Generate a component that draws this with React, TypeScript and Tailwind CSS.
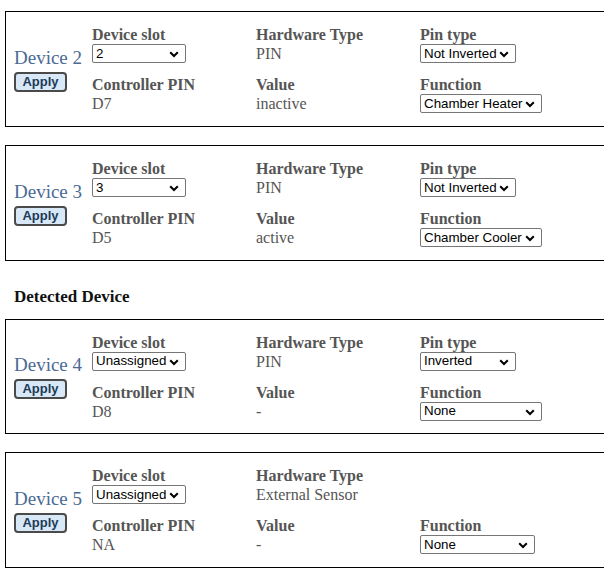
import React from "react";

const serif = { fontFamily: '"Liberation Serif", "Times New Roman", serif' };
const sans = { fontFamily: '"Liberation Sans", Arial, sans-serif' };

function Select({ value, width }: { value: string; width: number }) {
  return (
    <div
      className="relative flex h-[19px] items-center rounded-[2px] border border-[#767676] bg-white pl-[3px] text-[13.33px] leading-none text-black"
      style={{ ...sans, width }}
    >
      <span>{value}</span>
      <svg
        className="absolute right-[6px] top-[6px]"
        width="10"
        height="7"
        viewBox="0 0 10 7"
      >
        <path d="M1.2 1.2 L5 5 L8.8 1.2" fill="none" stroke="#000" strokeWidth="2" />
      </svg>
    </div>
  );
}

function Label({ children }: { children: React.ReactNode }) {
  return (
    <div className="text-[16px] font-bold leading-[18px] text-[#555]" style={serif}>
      {children}
    </div>
  );
}

function Val({ children }: { children: React.ReactNode }) {
  return (
    <div className="pt-[1px] text-[16px] leading-[18px] text-[#555]" style={serif}>
      {children}
    </div>
  );
}

type Dev = {
  n: number;
  slot: string;
  hw: string;
  pinType?: string;
  pinW?: number;
  pin: string;
  value: string;
  func: string;
  funcW: number;
  short?: boolean;
};

function DeviceBox({ d }: { d: Dev }) {
  return (
    <div
      className={
        d.short
          ? "ml-[5px] flex h-[115px] w-[640px] items-center border border-black"
          : "ml-[5px] flex h-[116px] w-[640px] items-center border border-black"
      }
    >
      <div className="flex w-[78px] flex-col items-start pl-[8px]">
        <div className="text-[19px] leading-[22px] text-[#4a6a94]" style={serif}>
          Device {d.n}
        </div>
        <button
          className="mt-[3px] flex h-[20px] w-[53px] items-center justify-center rounded-[4px] border-2 border-[#4a4a4a] bg-[#d9e8f6] text-[13px] font-bold text-[#1d3a58]"
          style={sans}
        >
          Apply
        </button>
      </div>
      <div className="ml-[8px] grid grid-cols-[164px_164px_164px] gap-y-[13px] pt-[1px]">
        <div>
          <Label>Device slot</Label>
          <Select value={d.slot} width={94} />
        </div>
        <div>
          <Label>Hardware Type</Label>
          <Val>{d.hw}</Val>
        </div>
        <div>
          {d.pinType ? (
            <>
              <Label>Pin type</Label>
              <Select value={d.pinType} width={d.pinW ?? 96} />
            </>
          ) : null}
        </div>
        <div>
          <Label>Controller PIN</Label>
          <Val>{d.pin}</Val>
        </div>
        <div>
          <Label>Value</Label>
          <Val>{d.value}</Val>
        </div>
        <div>
          <Label>Function</Label>
          <Select value={d.func} width={d.funcW} />
        </div>
      </div>
    </div>
  );
}

export default function App() {
  const top: Dev[] = [
    { n: 2, slot: "2", hw: "PIN", pinType: "Not Inverted", pin: "D7", value: "inactive", func: "Chamber Heater", funcW: 122 },
    { n: 3, slot: "3", hw: "PIN", pinType: "Not Inverted", pin: "D5", value: "active", func: "Chamber Cooler", funcW: 122 },
  ];
  const bottom: Dev[] = [
    { n: 4, slot: "Unassigned", hw: "PIN", pinType: "Inverted", pin: "D8", value: "-", func: "None", funcW: 122, short: true },
    { n: 5, slot: "Unassigned", hw: "External Sensor", pin: "NA", value: "-", func: "None", funcW: 115 },
  ];
  return (
    <div className="h-[577px] w-[604px] overflow-hidden bg-white pt-[11px]">
      <div className="flex flex-col gap-[18px]">
        {top.map((d) => (
          <DeviceBox key={d.n} d={d} />
        ))}
      </div>
      <div
        className="pl-[14px] pt-[26px] pb-[12px] text-[17px] font-bold leading-[20px] text-[#111]"
        style={serif}
      >
        Detected Device
      </div>
      <div className="flex flex-col gap-[18px]">
        {bottom.map((d) => (
          <DeviceBox key={d.n} d={d} />
        ))}
      </div>
    </div>
  );
}
